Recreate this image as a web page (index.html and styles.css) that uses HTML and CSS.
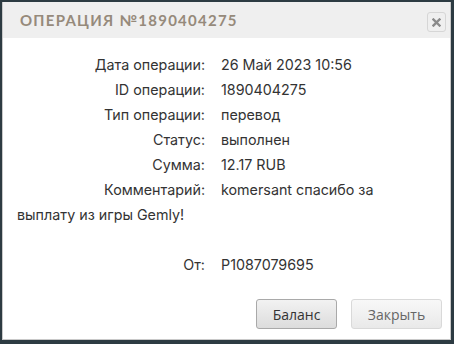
FILE: index.html
```html
<!DOCTYPE html>
<html lang="ru">
<head>
    <meta charset="UTF-8">
    <title>Операция №1890404275</title>
    <link rel="stylesheet" href="styles.css">
</head>
<body>
    <div class="dialog">
        <div class="dialog-header">
            <span class="dialog-title">Операция №1890404275</span>
            <button class="close-x" title="Закрыть">
                <svg width="9" height="9" viewBox="0 0 9 9">
                    <path d="M1.5 1.5 L7.5 7.5 M7.5 1.5 L1.5 7.5" stroke="#8a8a8a" stroke-width="2.4" stroke-linecap="square"/>
                </svg>
            </button>
        </div>
        <div class="dialog-body">
            <div class="row"><span class="label">Дата операции:</span>26 Май 2023 10:56</div>
            <div class="row"><span class="label">ID операции:</span>1890404275</div>
            <div class="row"><span class="label">Тип операции:</span>перевод</div>
            <div class="row"><span class="label">Статус:</span>выполнен</div>
            <div class="row"><span class="label">Сумма:</span>12.17 RUB</div>
            <div class="row"><span class="label">Комментарий:</span>komersant спасибо за выплату из игры Gemly!</div>
            <div class="row row-from"><span class="label">От:</span>P1087079695</div>
        </div>
        <div class="dialog-footer">
            <button class="button button-main">Баланс</button>
            <button class="button button-light">Закрыть</button>
        </div>
    </div>
</body>
</html>
```

FILE: styles.css
```css
body {
    margin: 0;
    padding: 2px 3px 4px 2px;
    background: #2d3b42;
    height: 344px;
    box-sizing: border-box;
}

.dialog {
    height: 100%;
    background: #fff;
    border: 1px solid #c9c9c9;
    border-top: none;
    box-sizing: border-box;
    display: flex;
    flex-direction: column;
}

.dialog-header {
    height: 36px;
    background: #efefef;
    display: flex;
    align-items: center;
    justify-content: space-between;
    padding: 0 4px 0 17px;
}

.dialog-title {
    font-family: "Lato", sans-serif;
    font-weight: 700;
    font-size: 15px;
    letter-spacing: 1.25px;
    text-transform: uppercase;
    color: #968a7b;
}

.close-x {
    width: 19px;
    height: 20px;
    padding: 0;
    margin-top: 4px;
    border: 1px solid #d6d6d6;
    border-radius: 3px;
    background: #efefef;
    display: flex;
    align-items: center;
    justify-content: center;
}

.dialog-body {
    flex: 1;
    padding: 14px 34px 0 14px;
    font-family: "Inter", sans-serif;
    font-size: 14.3px;
    line-height: 25px;
    color: #333;
}

.label {
    display: inline-block;
    width: 188px;
    margin-right: 16px;
    text-align: right;
}

.row-from {
    margin-top: 25px;
}

.dialog-footer {
    display: flex;
    justify-content: flex-end;
    gap: 14px;
    padding: 0 8px 10px 0;
}

.button {
    height: 30px;
    padding: 0 14px;
    border-radius: 3px;
    font-family: "Open Sans", sans-serif;
    font-size: 14px;
}

.button-main {
    width: 81px;
    color: #333;
    border: 1px solid #a9a9a9;
    background: linear-gradient(#f2f2f2, #dcdcdc);
}

.button-light {
    width: 91px;
    color: #666;
    border: 1px solid #d9d9d9;
    background: linear-gradient(#f8f8f8, #e9e9e9);
}
```
